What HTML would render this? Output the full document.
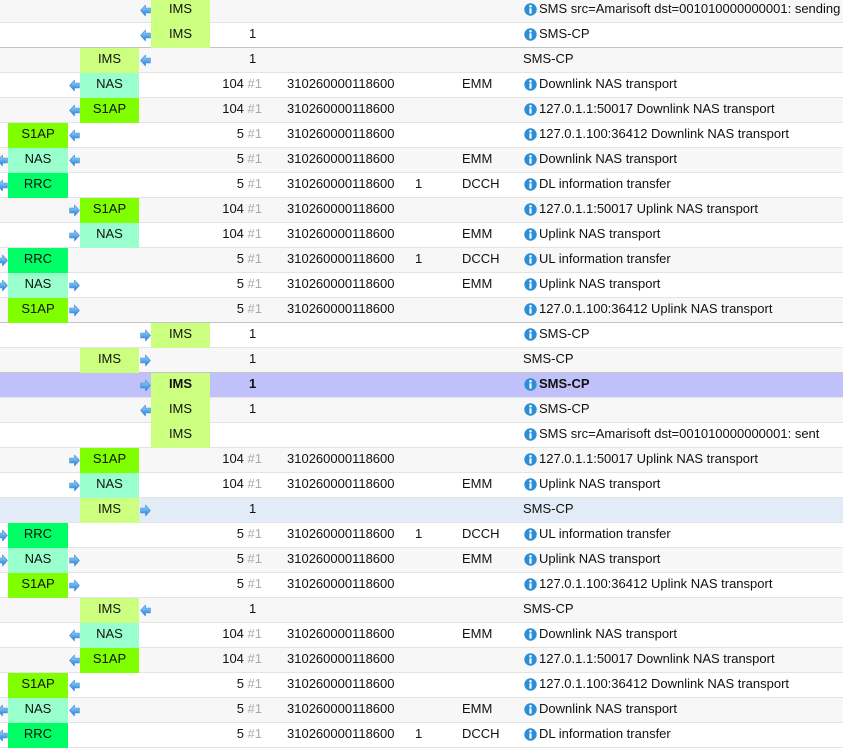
<!DOCTYPE html>
<html><head><meta charset="utf-8"><style>
html,body{margin:0;width:843px;height:750px;overflow:hidden}
body{background:#fff;font-family:"Liberation Sans",Arial,sans-serif;font-size:13px;color:#111;position:relative}
.r{position:absolute;left:0;width:843px;height:24px;border-bottom:1px solid #e4e4e4;background:#fff}
.g{background:#f7f7f7}
.d{border-bottom-color:#c4c4c4}
.h{background:#c0c0fa;font-weight:bold}
.b{background:#e1ecf7}
.r>*{position:absolute}
.box{top:0;height:25px;width:59px;text-align:center;line-height:22px}
.c1{left:8px;width:60px}.c2{left:80px}.c3{left:151px}
.IMS{background:#ccff80}.NAS{background:#99ffcc}.S1AP{background:#80ff00}.RRC{background:#00ff66}
.a{top:6px;width:11px;height:13px}
.n{right:581px;top:3px;text-align:right}
.n i{font-style:normal;color:#aaa}
.num1{left:249px;top:3px}
.im{left:287px;top:3px}
.one{left:415px;top:3px}
.ty{left:462px;top:3px}
.ic{left:524px;top:5px;width:13px;height:13px}
.t{left:539px;top:3px;white-space:nowrap}
.t0{left:523px;top:3px;white-space:nowrap}
</style></head><body>
<svg width="0" height="0" style="position:absolute">
<defs>
<linearGradient id="bg" x1="0" y1="0" x2="0" y2="1"><stop offset="0" stop-color="#a8dcff"/><stop offset="1" stop-color="#1a78d4"/></linearGradient>
<symbol id="L" viewBox="0 0 11 13"><path d="M0.6 6.5 L5.5 1 L5.5 4 L10.4 4 L10.4 9 L5.5 9 L5.5 12 Z" fill="url(#bg)" stroke="#3d8fd6" stroke-width="0.6" stroke-linejoin="round"/></symbol>
<symbol id="R" viewBox="0 0 11 13"><path d="M10.4 6.5 L5.5 1 L5.5 4 L0.6 4 L0.6 9 L5.5 9 L5.5 12 Z" fill="url(#bg)" stroke="#3d8fd6" stroke-width="0.6" stroke-linejoin="round"/></symbol>
<symbol id="I" viewBox="0 0 13 13"><circle cx="6.5" cy="6.5" r="6.2" fill="#2a8fd8"/><circle cx="6.5" cy="3.3" r="1.3" fill="#fff"/><rect x="5.4" y="5.3" width="2.2" height="5.3" fill="#fff"/></symbol>
</defs></svg>

<div class="r g" style="top:-2px"><svg class="a" style="left:140px"><use href="#L" width="11" height="13"/></svg><span class="box c3 IMS">IMS</span><svg class="ic"><use href="#I" width="13" height="13"/></svg><span class="t">SMS src=Amarisoft dst=001010000000001: sending</span></div>
<div class="r d" style="top:23px"><svg class="a" style="left:140px"><use href="#L" width="11" height="13"/></svg><span class="box c3 IMS">IMS</span><span class="num1">1</span><svg class="ic"><use href="#I" width="13" height="13"/></svg><span class="t">SMS-CP</span></div>
<div class="r g" style="top:48px"><span class="box c2 IMS">IMS</span><svg class="a" style="left:140px"><use href="#L" width="11" height="13"/></svg><span class="num1">1</span><span class="t0">SMS-CP</span></div>
<div class="r" style="top:73px"><svg class="a" style="left:69px"><use href="#L" width="11" height="13"/></svg><span class="box c2 NAS">NAS</span><span class="n">104 <i>#1</i></span><span class="im">310260000118600</span><span class="ty">EMM</span><svg class="ic"><use href="#I" width="13" height="13"/></svg><span class="t">Downlink NAS transport</span></div>
<div class="r g" style="top:98px"><svg class="a" style="left:69px"><use href="#L" width="11" height="13"/></svg><span class="box c2 S1AP">S1AP</span><span class="n">104 <i>#1</i></span><span class="im">310260000118600</span><svg class="ic"><use href="#I" width="13" height="13"/></svg><span class="t">127.0.1.1:50017 Downlink NAS transport</span></div>
<div class="r" style="top:123px"><span class="box c1 S1AP">S1AP</span><svg class="a" style="left:69px"><use href="#L" width="11" height="13"/></svg><span class="n">5 <i>#1</i></span><span class="im">310260000118600</span><svg class="ic"><use href="#I" width="13" height="13"/></svg><span class="t">127.0.1.100:36412 Downlink NAS transport</span></div>
<div class="r g" style="top:148px"><svg class="a" style="left:-3px"><use href="#L" width="11" height="13"/></svg><span class="box c1 NAS">NAS</span><svg class="a" style="left:69px"><use href="#L" width="11" height="13"/></svg><span class="n">5 <i>#1</i></span><span class="im">310260000118600</span><span class="ty">EMM</span><svg class="ic"><use href="#I" width="13" height="13"/></svg><span class="t">Downlink NAS transport</span></div>
<div class="r" style="top:173px"><svg class="a" style="left:-3px"><use href="#L" width="11" height="13"/></svg><span class="box c1 RRC">RRC</span><span class="n">5 <i>#1</i></span><span class="im">310260000118600</span><span class="one">1</span><span class="ty">DCCH</span><svg class="ic"><use href="#I" width="13" height="13"/></svg><span class="t">DL information transfer</span></div>
<div class="r g" style="top:198px"><svg class="a" style="left:69px"><use href="#R" width="11" height="13"/></svg><span class="box c2 S1AP">S1AP</span><span class="n">104 <i>#1</i></span><span class="im">310260000118600</span><svg class="ic"><use href="#I" width="13" height="13"/></svg><span class="t">127.0.1.1:50017 Uplink NAS transport</span></div>
<div class="r" style="top:223px"><svg class="a" style="left:69px"><use href="#R" width="11" height="13"/></svg><span class="box c2 NAS">NAS</span><span class="n">104 <i>#1</i></span><span class="im">310260000118600</span><span class="ty">EMM</span><svg class="ic"><use href="#I" width="13" height="13"/></svg><span class="t">Uplink NAS transport</span></div>
<div class="r g" style="top:248px"><svg class="a" style="left:-3px"><use href="#R" width="11" height="13"/></svg><span class="box c1 RRC">RRC</span><span class="n">5 <i>#1</i></span><span class="im">310260000118600</span><span class="one">1</span><span class="ty">DCCH</span><svg class="ic"><use href="#I" width="13" height="13"/></svg><span class="t">UL information transfer</span></div>
<div class="r" style="top:273px"><svg class="a" style="left:-3px"><use href="#R" width="11" height="13"/></svg><span class="box c1 NAS">NAS</span><svg class="a" style="left:69px"><use href="#R" width="11" height="13"/></svg><span class="n">5 <i>#1</i></span><span class="im">310260000118600</span><span class="ty">EMM</span><svg class="ic"><use href="#I" width="13" height="13"/></svg><span class="t">Uplink NAS transport</span></div>
<div class="r g d" style="top:298px"><span class="box c1 S1AP">S1AP</span><svg class="a" style="left:69px"><use href="#R" width="11" height="13"/></svg><span class="n">5 <i>#1</i></span><span class="im">310260000118600</span><svg class="ic"><use href="#I" width="13" height="13"/></svg><span class="t">127.0.1.100:36412 Uplink NAS transport</span></div>
<div class="r" style="top:323px"><svg class="a" style="left:140px"><use href="#R" width="11" height="13"/></svg><span class="box c3 IMS">IMS</span><span class="num1">1</span><svg class="ic"><use href="#I" width="13" height="13"/></svg><span class="t">SMS-CP</span></div>
<div class="r g d" style="top:348px"><span class="box c2 IMS">IMS</span><svg class="a" style="left:140px"><use href="#R" width="11" height="13"/></svg><span class="num1">1</span><span class="t0">SMS-CP</span></div>
<div class="r h" style="top:373px"><svg class="a" style="left:140px"><use href="#R" width="11" height="13"/></svg><span class="box c3 IMS">IMS</span><span class="num1">1</span><svg class="ic"><use href="#I" width="13" height="13"/></svg><span class="t">SMS-CP</span></div>
<div class="r g" style="top:398px"><svg class="a" style="left:140px"><use href="#L" width="11" height="13"/></svg><span class="box c3 IMS">IMS</span><span class="num1">1</span><svg class="ic"><use href="#I" width="13" height="13"/></svg><span class="t">SMS-CP</span></div>
<div class="r" style="top:423px"><span class="box c3 IMS">IMS</span><svg class="ic"><use href="#I" width="13" height="13"/></svg><span class="t">SMS src=Amarisoft dst=001010000000001: sent</span></div>
<div class="r g" style="top:448px"><svg class="a" style="left:69px"><use href="#R" width="11" height="13"/></svg><span class="box c2 S1AP">S1AP</span><span class="n">104 <i>#1</i></span><span class="im">310260000118600</span><svg class="ic"><use href="#I" width="13" height="13"/></svg><span class="t">127.0.1.1:50017 Uplink NAS transport</span></div>
<div class="r" style="top:473px"><svg class="a" style="left:69px"><use href="#R" width="11" height="13"/></svg><span class="box c2 NAS">NAS</span><span class="n">104 <i>#1</i></span><span class="im">310260000118600</span><span class="ty">EMM</span><svg class="ic"><use href="#I" width="13" height="13"/></svg><span class="t">Uplink NAS transport</span></div>
<div class="r b" style="top:498px"><span class="box c2 IMS">IMS</span><svg class="a" style="left:140px"><use href="#R" width="11" height="13"/></svg><span class="num1">1</span><span class="t0">SMS-CP</span></div>
<div class="r" style="top:523px"><svg class="a" style="left:-3px"><use href="#R" width="11" height="13"/></svg><span class="box c1 RRC">RRC</span><span class="n">5 <i>#1</i></span><span class="im">310260000118600</span><span class="one">1</span><span class="ty">DCCH</span><svg class="ic"><use href="#I" width="13" height="13"/></svg><span class="t">UL information transfer</span></div>
<div class="r g" style="top:548px"><svg class="a" style="left:-3px"><use href="#R" width="11" height="13"/></svg><span class="box c1 NAS">NAS</span><svg class="a" style="left:69px"><use href="#R" width="11" height="13"/></svg><span class="n">5 <i>#1</i></span><span class="im">310260000118600</span><span class="ty">EMM</span><svg class="ic"><use href="#I" width="13" height="13"/></svg><span class="t">Uplink NAS transport</span></div>
<div class="r" style="top:573px"><span class="box c1 S1AP">S1AP</span><svg class="a" style="left:69px"><use href="#R" width="11" height="13"/></svg><span class="n">5 <i>#1</i></span><span class="im">310260000118600</span><svg class="ic"><use href="#I" width="13" height="13"/></svg><span class="t">127.0.1.100:36412 Uplink NAS transport</span></div>
<div class="r g" style="top:598px"><span class="box c2 IMS">IMS</span><svg class="a" style="left:140px"><use href="#L" width="11" height="13"/></svg><span class="num1">1</span><span class="t0">SMS-CP</span></div>
<div class="r" style="top:623px"><svg class="a" style="left:69px"><use href="#L" width="11" height="13"/></svg><span class="box c2 NAS">NAS</span><span class="n">104 <i>#1</i></span><span class="im">310260000118600</span><span class="ty">EMM</span><svg class="ic"><use href="#I" width="13" height="13"/></svg><span class="t">Downlink NAS transport</span></div>
<div class="r g" style="top:648px"><svg class="a" style="left:69px"><use href="#L" width="11" height="13"/></svg><span class="box c2 S1AP">S1AP</span><span class="n">104 <i>#1</i></span><span class="im">310260000118600</span><svg class="ic"><use href="#I" width="13" height="13"/></svg><span class="t">127.0.1.1:50017 Downlink NAS transport</span></div>
<div class="r" style="top:673px"><span class="box c1 S1AP">S1AP</span><svg class="a" style="left:69px"><use href="#L" width="11" height="13"/></svg><span class="n">5 <i>#1</i></span><span class="im">310260000118600</span><svg class="ic"><use href="#I" width="13" height="13"/></svg><span class="t">127.0.1.100:36412 Downlink NAS transport</span></div>
<div class="r g" style="top:698px"><svg class="a" style="left:-3px"><use href="#L" width="11" height="13"/></svg><span class="box c1 NAS">NAS</span><svg class="a" style="left:69px"><use href="#L" width="11" height="13"/></svg><span class="n">5 <i>#1</i></span><span class="im">310260000118600</span><span class="ty">EMM</span><svg class="ic"><use href="#I" width="13" height="13"/></svg><span class="t">Downlink NAS transport</span></div>
<div class="r" style="top:723px"><svg class="a" style="left:-3px"><use href="#L" width="11" height="13"/></svg><span class="box c1 RRC">RRC</span><span class="n">5 <i>#1</i></span><span class="im">310260000118600</span><span class="one">1</span><span class="ty">DCCH</span><svg class="ic"><use href="#I" width="13" height="13"/></svg><span class="t">DL information transfer</span></div>
</body></html>
